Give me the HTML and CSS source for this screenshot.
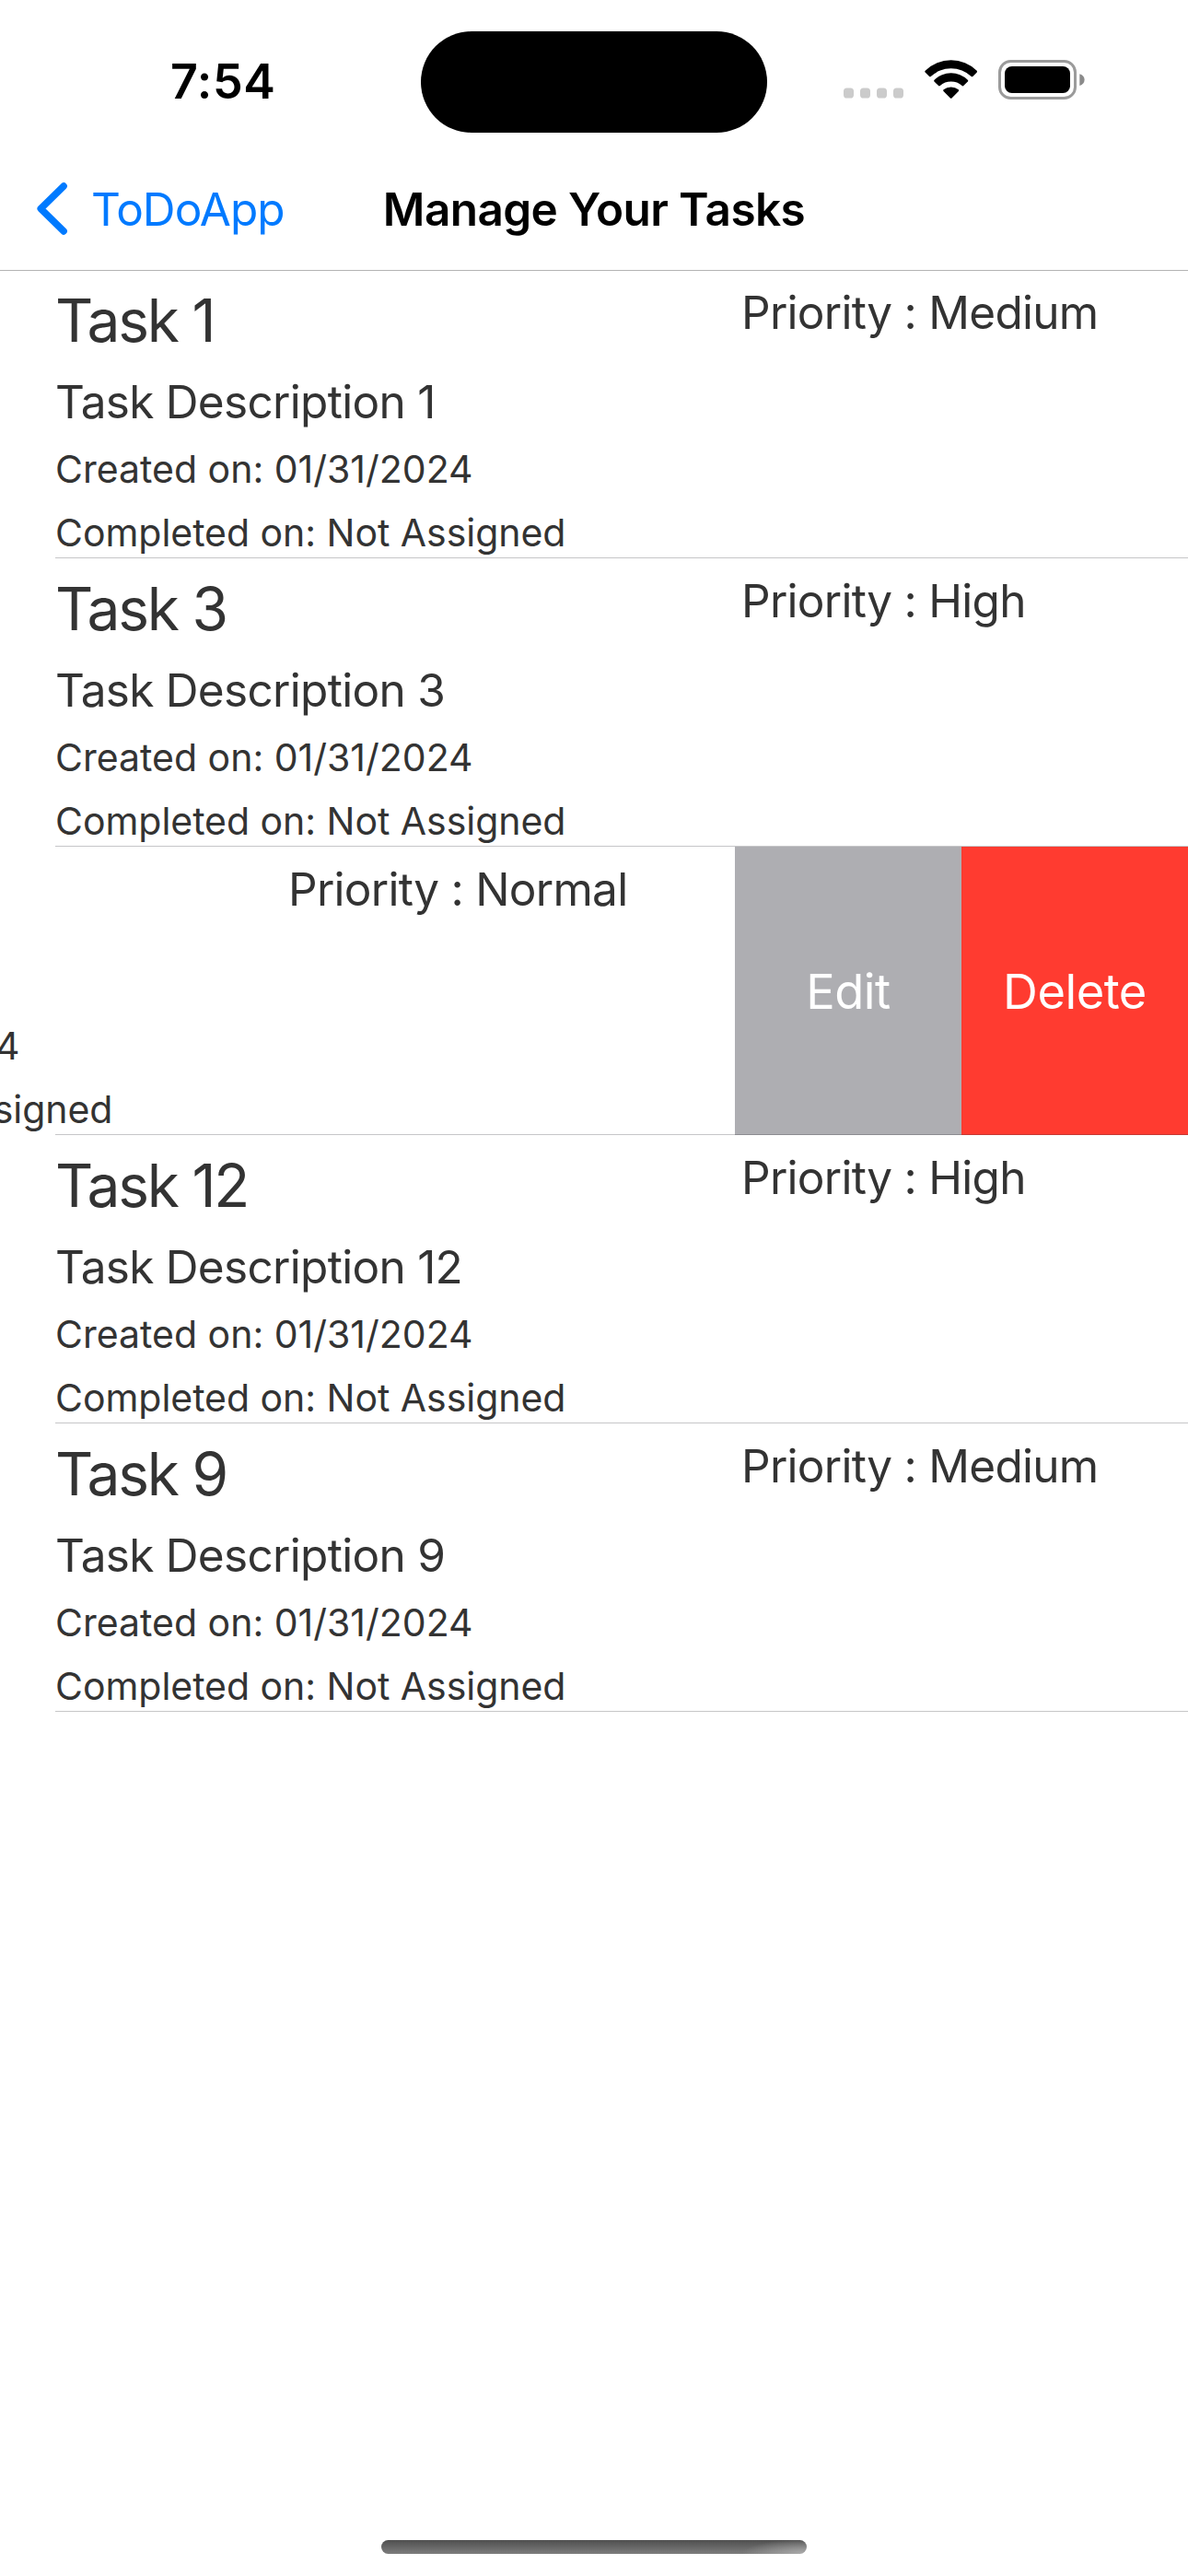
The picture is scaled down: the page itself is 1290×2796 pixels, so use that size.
FILE: index.html
```html
<!DOCTYPE html>
<html lang="en">
<head>
<meta charset="utf-8">
<title>Manage Your Tasks</title>
<link rel="stylesheet" href="styles.css">
</head>
<body>
<div class="screen">
  <header class="status-bar">
    <span class="clock">7:54</span>
    <span class="island"></span>
    <div class="status-icons">
      <svg class="cellular" width="65" height="12" viewBox="0 0 65 12" fill="#cbcbcb">
        <rect x="0" y="0.5" width="11" height="11" rx="3.6"/>
        <rect x="18" y="0.5" width="11" height="11" rx="3.6"/>
        <rect x="36" y="0.5" width="11" height="11" rx="3.6"/>
        <rect x="54" y="0.5" width="11" height="11" rx="3.6"/>
      </svg>
      <svg class="wifi" width="57.4" height="43" viewBox="0 0 57.4 43">
        <path d="M.7 11.7A40 40 0 0 1 56.7 11.7Q57.6 12.5 56.8 13.4L52.3 18Q51.5 18.7 50.7 18A32.3 32.3 0 0 0 6.7 18Q5.9 18.7 5.1 18L.6 13.4Q-.2 12.5 .7 11.7Z"/>
        <path d="M10.6 21.8A25.6 25.6 0 0 1 46.8 21.8Q47.7 22.6 46.9 23.4L42.3 28Q41.5 28.8 40.6 28.1A18 18 0 0 0 16.8 28.1Q15.9 28.8 15.1 28L10.5 23.4Q9.7 22.6 10.6 21.8Z"/>
        <path d="M20.6 32.3A13 13 0 0 1 36.8 32.3Q37.7 33.1 36.9 33.9L29.5 41.4Q28.7 42.2 27.9 41.4L20.5 33.9Q19.7 33.1 20.6 32.3Z"/>
      </svg>
      <svg class="battery" width="94" height="43" viewBox="0 0 94 43">
        <rect x="1.5" y="1.5" width="82" height="40" rx="12" fill="none" stroke="#9b9b9b" stroke-width="3"/>
        <rect x="7" y="7" width="71" height="29" rx="7.8"/>
        <path d="M88.3 15.2Q93.6 16.8 93.6 21.6Q93.6 26.4 88.3 28Z" fill="#8a8a8a"/>
      </svg>
    </div>
  </header>

  <nav class="nav-bar">
    <a class="back">
      <svg width="34" height="57" viewBox="0 0 34 57" fill="none" stroke="#007aff" stroke-width="7.4" stroke-linecap="round" stroke-linejoin="round">
        <path d="M29.2 4L4.2 28.5L29.2 53"/>
      </svg>
      <span>ToDoApp</span>
    </a>
    <h1 class="nav-title">Manage Your Tasks</h1>
  </nav>

  <ul class="task-list">
    <li class="row">
      <div class="cell">
        <div class="info">
          <h2 class="name">Task 1</h2>
          <p class="description">Task Description 1</p>
          <p class="date">Created on: 01/31/2024</p>
          <p class="date">Completed on: Not Assigned</p>
        </div>
        <p class="priority">Priority : Medium</p>
      </div>
    </li>
    <li class="row">
      <div class="cell">
        <div class="info">
          <h2 class="name">Task 3</h2>
          <p class="description">Task Description 3</p>
          <p class="date">Created on: 01/31/2024</p>
          <p class="date">Completed on: Not Assigned</p>
        </div>
        <p class="priority">Priority : High</p>
      </div>
    </li>
    <li class="row swiped">
      <div class="cell">
        <div class="info">
          <h2 class="name"></h2>
          <p class="description"></p>
          <p class="date">Created on: 01/31/2024</p>
          <p class="date">Completed on: Not Assigned</p>
        </div>
        <p class="priority">Priority : Normal</p>
      </div>
      <div class="actions">
        <button class="action edit">Edit</button>
        <button class="action delete">Delete</button>
      </div>
    </li>
    <li class="row">
      <div class="cell">
        <div class="info">
          <h2 class="name">Task 12</h2>
          <p class="description">Task Description 12</p>
          <p class="date">Created on: 01/31/2024</p>
          <p class="date">Completed on: Not Assigned</p>
        </div>
        <p class="priority">Priority : High</p>
      </div>
    </li>
    <li class="row">
      <div class="cell">
        <div class="info">
          <h2 class="name">Task 9</h2>
          <p class="description">Task Description 9</p>
          <p class="date">Created on: 01/31/2024</p>
          <p class="date">Completed on: Not Assigned</p>
        </div>
        <p class="priority">Priority : Medium</p>
      </div>
    </li>
  </ul>

  <div class="home-indicator"></div>
</div>
</body>
</html>
```
FILE: styles.css
```css
* {
  box-sizing: border-box;
  margin: 0;
  padding: 0;
}

body {
  background: #fff;
  color: #333;
  font-family: Inter, "Liberation Sans", sans-serif;
}

.screen {
  display: flex;
  flex-direction: column;
  width: 1290px;
  height: 2796px;
  overflow: hidden;
}

/* Status bar */
.status-bar {
  display: grid;
  grid-template-columns: 457px 376px 457px;
  height: 160px;
  padding-top: 34px;
  color: #000;
}

.clock {
  padding-left: 185px;
  font-size: 52px;
  font-weight: 600;
  line-height: 109px;
  letter-spacing: 0.6px;
}

.island {
  height: 110px;
  border-radius: 55px;
  background: #000;
}

.status-icons {
  display: flex;
  align-items: flex-end;
  height: 43px;
  margin-top: 31px;
  padding-left: 83px;
}

.cellular {
  margin-bottom: 1px;
}

.wifi {
  margin-left: 22.7px;
}

.battery {
  margin-left: 22.9px;
}

/* Navigation bar */
.nav-bar {
  display: grid;
  grid-template-columns: 1fr auto 1fr;
  align-items: center;
  height: 134px;
  border-bottom: 1px solid #b3b3b3;
}

.back {
  display: flex;
  align-items: center;
  gap: 25px;
  padding-left: 40px;
  color: #007aff;
  font-size: 49.5px;
  line-height: 60px;
  letter-spacing: -0.95px;
}

.nav-title {
  color: #000;
  font-size: 49.5px;
  font-weight: 600;
  line-height: 60px;
  letter-spacing: -0.6px;
}

/* Task list */
.task-list {
  margin-top: -1px;
  list-style: none;
}

.row {
  position: relative;
  display: flex;
  height: 313px;
  font-feature-settings: "calt" 0;
}

.row::after {
  content: "";
  position: absolute;
  right: 0;
  bottom: 0;
  left: 60px;
  height: 1px;
  background: rgba(60, 60, 67, 0.29);
}

.swiped .cell {
  margin-left: -492px;
}

.cell {
  display: grid;
  flex: none;
  grid-template-columns: 745px 1fr;
  width: 1290px;
  padding: 16px 0 3px 60px;
}

.name {
  height: 77px;
  font-size: 64px;
  font-weight: 400;
  line-height: 77px;
  letter-spacing: -2.2px;
}

.description {
  height: 60px;
  margin-top: 20px;
  font-size: 49.5px;
  line-height: 60px;
  letter-spacing: -0.7px;
}

.date {
  margin-top: 18px;
  font-size: 41px;
  line-height: 50px;
}

.date + .date {
  margin-top: 19px;
  letter-spacing: -0.04px;
}

.priority {
  font-size: 49.5px;
  line-height: 60px;
  letter-spacing: -0.72px;
}

.actions {
  display: flex;
  flex: none;
  width: 492px;
}

.action {
  flex: 1;
  border: 0;
  color: #fff;
  font-family: inherit;
  font-size: 52.4px;
  letter-spacing: -0.5px;
}

.edit {
  background: #aeaeb2;
}

.delete {
  background: #ff3b30;
}

/* Home indicator */
.home-indicator {
  align-self: center;
  width: 462px;
  height: 15px;
  margin-top: auto;
  margin-bottom: 24px;
  border-radius: 7.5px;
  background:
    radial-gradient(ellipse 70px 16px at 100% 100%, rgba(190, 190, 190, 0.75), rgba(190, 190, 190, 0)),
    linear-gradient(#4f4f4f, #7d7d7d);
}
```
